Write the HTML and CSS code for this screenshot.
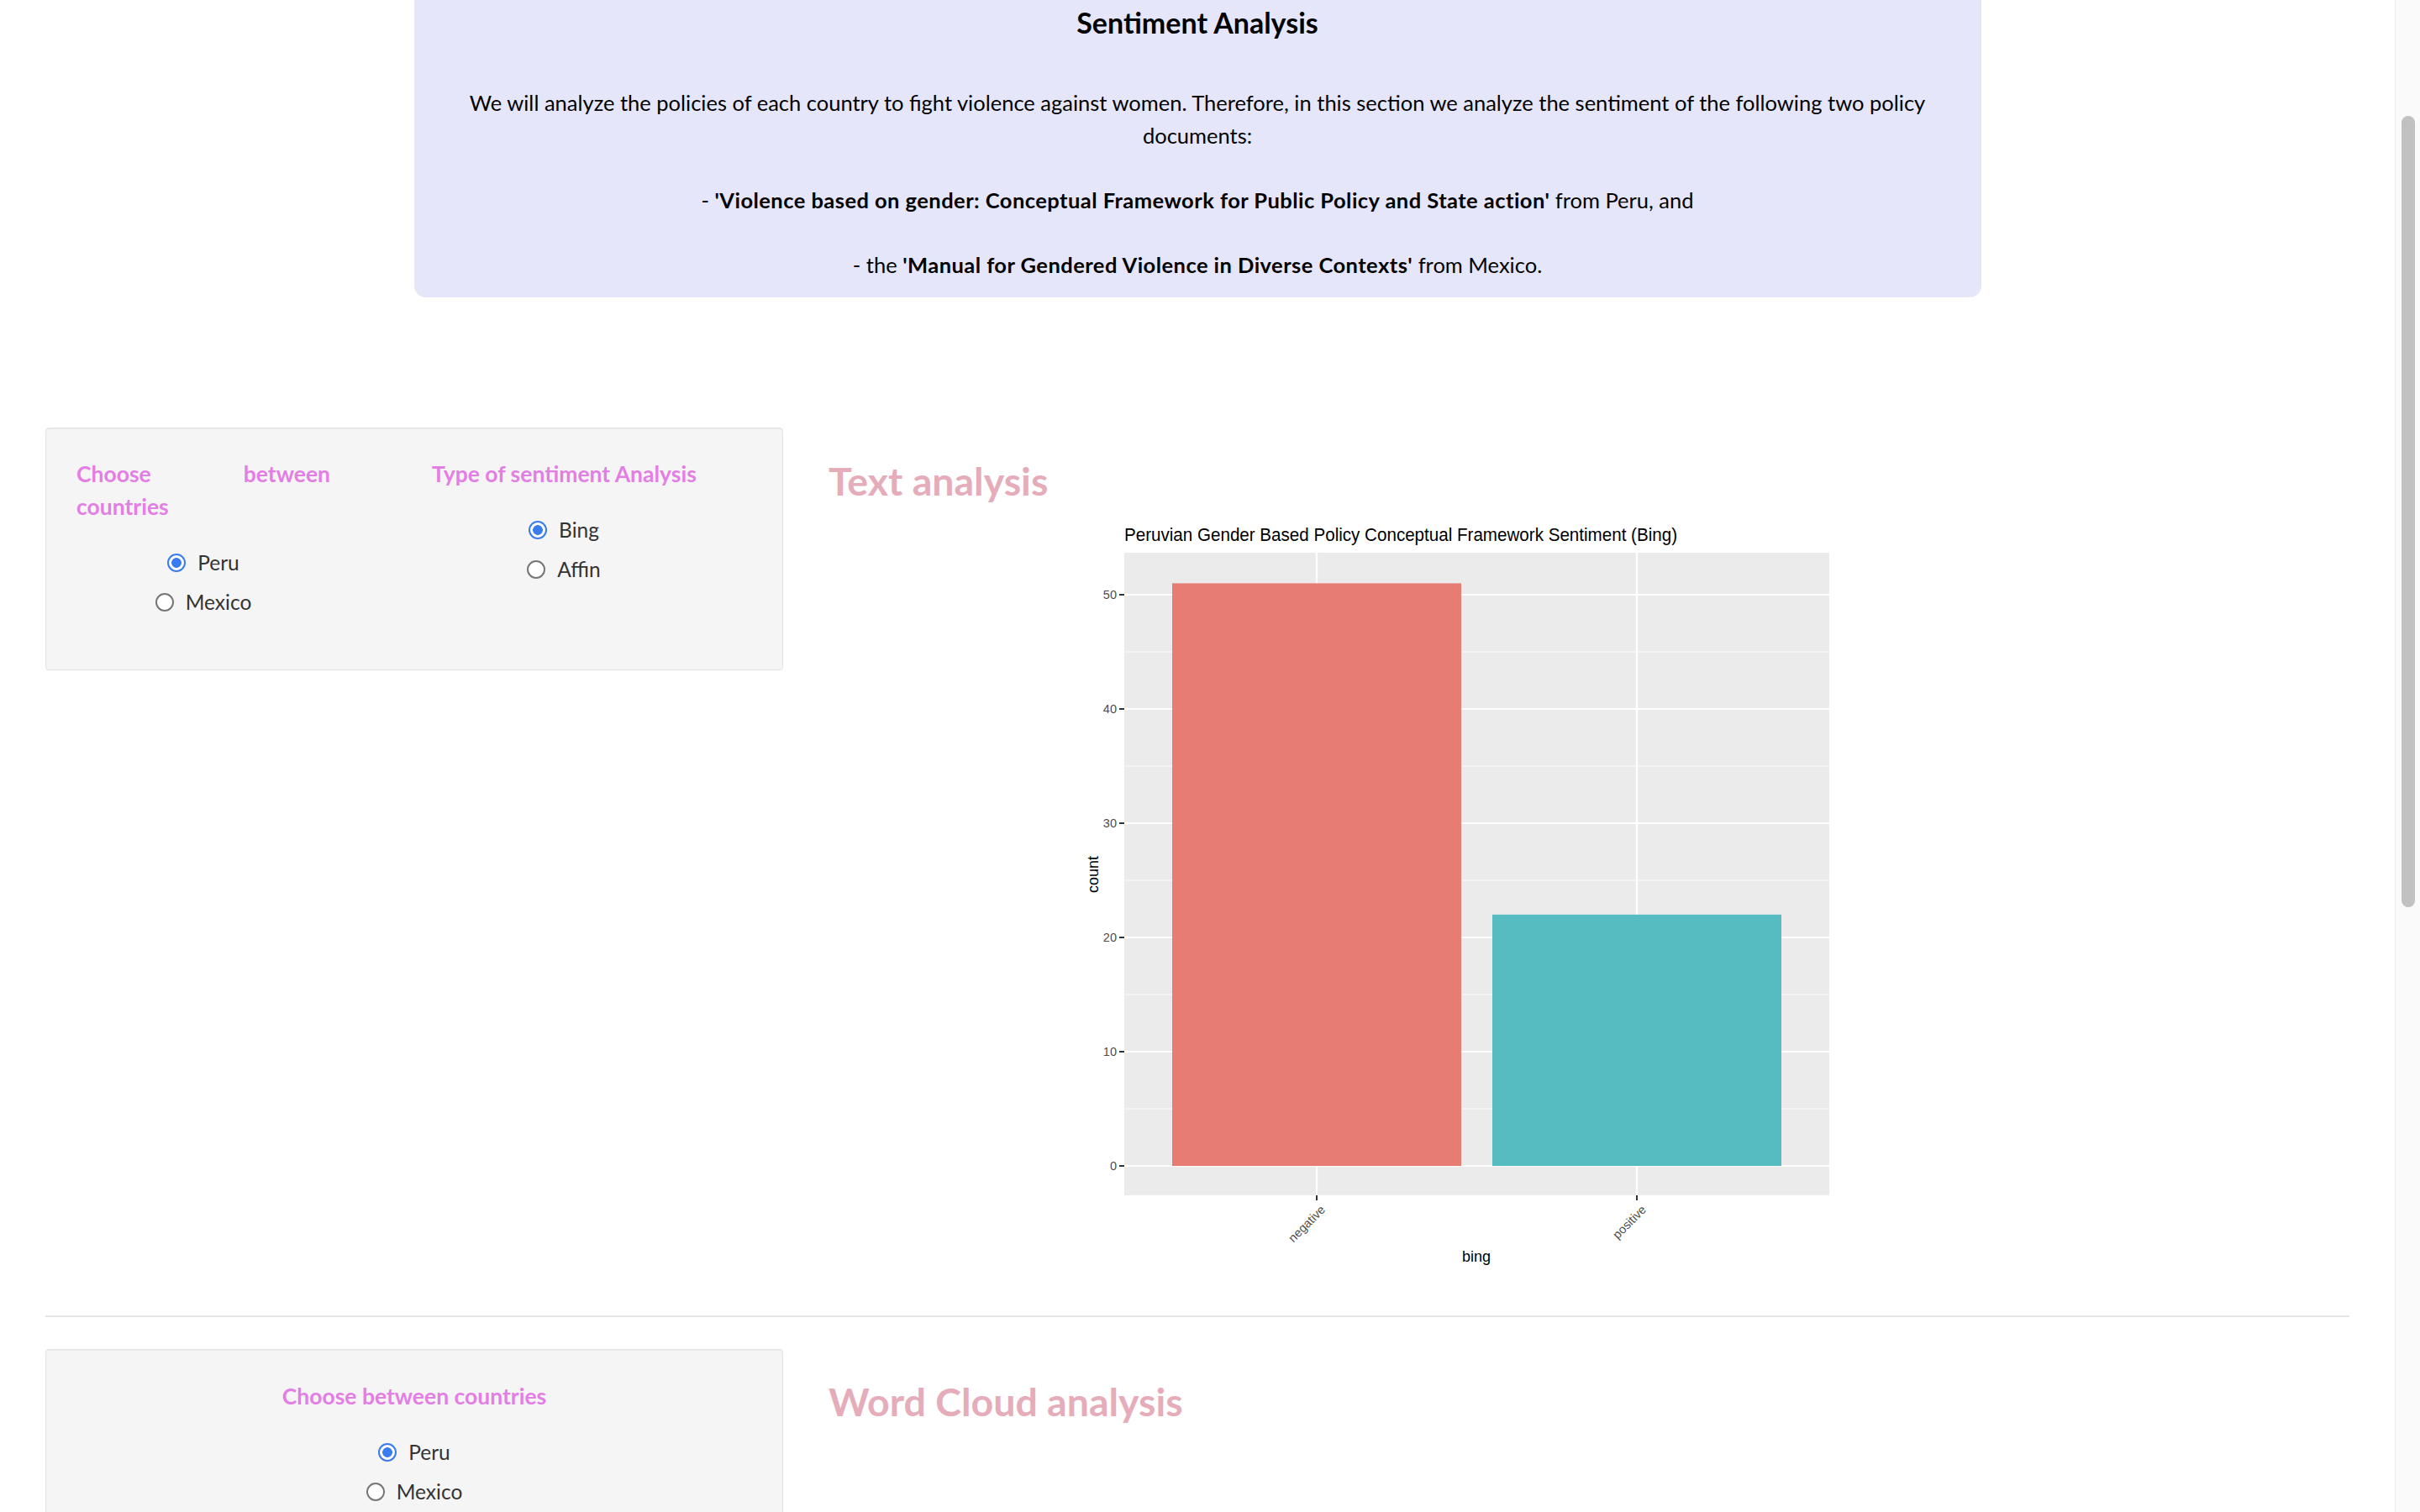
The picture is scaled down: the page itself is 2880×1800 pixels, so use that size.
FILE: index.html
```html
<!DOCTYPE html>
<html lang="en">
<head>
<meta charset="utf-8">
<title>Sentiment Analysis</title>
<link rel="stylesheet" href="styles.css">
</head>
<body>
<div class="page">
  <div class="content">
    <div class="intro">
      <h4 class="intro-title">Sentiment Analysis</h4>
      <p>We will analyze the policies of each country to fight violence against women. Therefore, in this section we analyze the sentiment of the following two policy documents:</p>
      <p>- <b>'Violence based on gender: Conceptual Framework for Public Policy and State action'</b> from Peru, and</p>
      <p>- the <b>'Manual for Gendered Violence in Diverse Contexts'</b> from Mexico.</p>
    </div>

    <div class="row row-first">
      <div class="panel panel-a">
        <div class="fields">
          <div class="field">
            <h5 class="ctl-label justify">Choose between<br>countries</h5>
            <div class="options">
              <label class="opt"><input class="radio" type="radio" name="c1" checked><span>Peru</span></label>
              <label class="opt"><input class="radio" type="radio" name="c1"><span>Mexico</span></label>
            </div>
          </div>
          <div class="field">
            <h5 class="ctl-label nowrap">Type of sentiment Analysis</h5>
            <div class="options">
              <label class="opt"><input class="radio" type="radio" name="t1" checked><span>Bing</span></label>
              <label class="opt"><input class="radio" type="radio" name="t1"><span>Affin</span></label>
            </div>
          </div>
        </div>
      </div>
      <div class="main">
        <h3 class="main-title">Text analysis</h3>
        <svg class="chart" width="900" height="910" viewBox="0 0 900 910">
          <text class="c-title" x="58" y="33" textLength="658" lengthAdjust="spacingAndGlyphs">Peruvian Gender Based Policy Conceptual Framework Sentiment (Bing)</text>
          <rect x="58" y="47" width="839" height="765" fill="#ebebeb"/>
          <g class="minor">
            <line x1="58" x2="897" y1="709" y2="709"/>
            <line x1="58" x2="897" y1="573" y2="573"/>
            <line x1="58" x2="897" y1="437" y2="437"/>
            <line x1="58" x2="897" y1="301" y2="301"/>
            <line x1="58" x2="897" y1="165" y2="165"/>
          </g>
          <g class="major">
            <line x1="58" x2="897" y1="777" y2="777"/>
            <line x1="58" x2="897" y1="641" y2="641"/>
            <line x1="58" x2="897" y1="505" y2="505"/>
            <line x1="58" x2="897" y1="369" y2="369"/>
            <line x1="58" x2="897" y1="233" y2="233"/>
            <line x1="58" x2="897" y1="97" y2="97"/>
            <line x1="287" x2="287" y1="47" y2="812"/>
            <line x1="668" x2="668" y1="47" y2="812"/>
          </g>
          <rect class="bar-neg" x="115" y="83.4" width="344" height="693.6"/>
          <rect class="bar-pos" x="496" y="477.8" width="344" height="299.2"/>
          <g class="ticks">
            <line x1="52" x2="58" y1="777" y2="777"/>
            <line x1="52" x2="58" y1="641" y2="641"/>
            <line x1="52" x2="58" y1="505" y2="505"/>
            <line x1="52" x2="58" y1="369" y2="369"/>
            <line x1="52" x2="58" y1="233" y2="233"/>
            <line x1="52" x2="58" y1="97" y2="97"/>
            <line x1="287" x2="287" y1="812" y2="818"/>
            <line x1="668" x2="668" y1="812" y2="818"/>
          </g>
          <g class="ylab">
            <text x="49" y="782">0</text>
            <text x="49" y="646">10</text>
            <text x="49" y="510">20</text>
            <text x="49" y="374">30</text>
            <text x="49" y="238">40</text>
            <text x="49" y="102">50</text>
          </g>
          <text class="xlab" transform="translate(298 830) rotate(-45)">negative</text>
          <text class="xlab" transform="translate(680 830) rotate(-45)">positive</text>
          <text class="axis-title" transform="translate(27 430) rotate(-90)">count</text>
          <text class="axis-title" x="477" y="891">bing</text>
        </svg>
      </div>
    </div>

    <hr class="sep">

    <div class="row">
      <div class="panel panel-b">
        <h5 class="ctl-label">Choose between countries</h5>
        <div class="options">
          <label class="opt"><input class="radio" type="radio" name="c2" checked><span>Peru</span></label>
          <label class="opt"><input class="radio" type="radio" name="c2"><span>Mexico</span></label>
        </div>
      </div>
      <div class="main">
        <h3 class="main-title second">Word Cloud analysis</h3>
      </div>
    </div>
  </div>
  <div class="scrollbar"><div class="thumb"></div></div>
</div>
</body>
</html>
```

FILE: styles.css
```css
html, body {
  margin: 0;
  padding: 0;
}
body {
  width: 2880px;
  height: 1800px;
  overflow: hidden;
  background: #ffffff;
  font-family: Lato, "Open Sans", sans-serif;
  color: #333333;
}
.page {
  display: flex;
  height: 1800px;
}
.content {
  flex: 1;
  min-width: 0;
  padding: 0 54px;
}
.intro {
  width: 1865px;
  box-sizing: border-box;
  margin: 0 auto;
  background: #e6e6fa;
  border-radius: 0 0 14px 14px;
  padding: 7px 48px 19px;
  text-align: center;
  color: #000000;
}
.intro-title {
  font-size: 34px;
  font-weight: 700;
  line-height: 40px;
  margin: 0 0 56px;
}
.intro p {
  font-size: 25.5px;
  line-height: 39px;
  margin: 0 0 38px;
}
.intro p:last-child {
  margin-bottom: 0;
}
.intro b {
  letter-spacing: 0.45px;
}
.row {
  display: flex;
  align-items: flex-start;
  gap: 54px;
}
.row-first {
  margin-top: 155px;
}
.panel {
  width: 878px;
  flex: none;
  box-sizing: border-box;
  background: #f5f5f5;
  border: 1px solid #e3e3e3;
  border-radius: 4px;
  box-shadow: inset 0 1px 1px rgba(0, 0, 0, 0.05);
}
.panel-a {
  padding: 35px 20px 57px 36px;
}
.panel-b {
  padding: 36px 20px 120px;
  text-align: center;
}
.fields {
  display: grid;
  grid-template-columns: 302px 314px;
  column-gap: 121px;
}
.ctl-label {
  font-size: 26.5px;
  font-weight: 700;
  line-height: 39px;
  color: #e27ee4;
  margin: 0;
}
.justify {
  text-align: justify;
  text-align-last: justify;
}
.nowrap {
  white-space: nowrap;
}
.options {
  display: flex;
  flex-direction: column;
  align-items: center;
  margin-top: 23px;
}
.opt {
  display: flex;
  align-items: center;
  gap: 14px;
  height: 47px;
  font-size: 24.5px;
  color: #333333;
}
.radio {
  appearance: none;
  -webkit-appearance: none;
  margin: 0;
  width: 22px;
  height: 22px;
  box-sizing: border-box;
  border-radius: 50%;
  border: 2px solid #767676;
  background: #ffffff;
}
.radio:checked {
  border-color: #3a7bf0;
  background: radial-gradient(circle, #3a7bf0 0 5.5px, #ffffff 6.2px);
}
.main {
  flex: 1;
  min-width: 0;
}
.main-title {
  font-size: 46.5px;
  font-weight: 700;
  line-height: 48px;
  color: #e5acba;
  margin: 39px 0 15px;
}
.main-title.second {
  margin-top: 38px;
}
.chart {
  display: block;
  margin-left: 294px;
}
.chart text {
  font-family: "Liberation Sans", Arial, sans-serif;
}
.c-title {
  font-size: 22px;
  fill: #000000;
}
.minor line {
  stroke: #ffffff;
  stroke-width: 1.1;
}
.major line {
  stroke: #ffffff;
  stroke-width: 2.2;
}
.bar-neg {
  fill: #e77c72;
}
.bar-pos {
  fill: #56bcc2;
}
.ticks line {
  stroke: #333333;
  stroke-width: 2;
}
.ylab text {
  font-size: 14.5px;
  fill: #4d4d4d;
  text-anchor: end;
}
.xlab {
  font-size: 14.5px;
  fill: #4d4d4d;
  text-anchor: end;
}
.axis-title {
  font-size: 18px;
  fill: #000000;
  text-anchor: middle;
}
.sep {
  border: 0;
  border-top: 2px solid #e5e5e5;
  margin: 45px 0 38px;
}
.scrollbar {
  width: 30px;
  flex: none;
  box-sizing: border-box;
  background: #fafafa;
  border-left: 1px solid #ebebeb;
  padding-top: 138px;
}
.thumb {
  width: 16px;
  height: 942px;
  margin-left: 7px;
  border-radius: 8px;
  background: #c1c1c1;
}
```
